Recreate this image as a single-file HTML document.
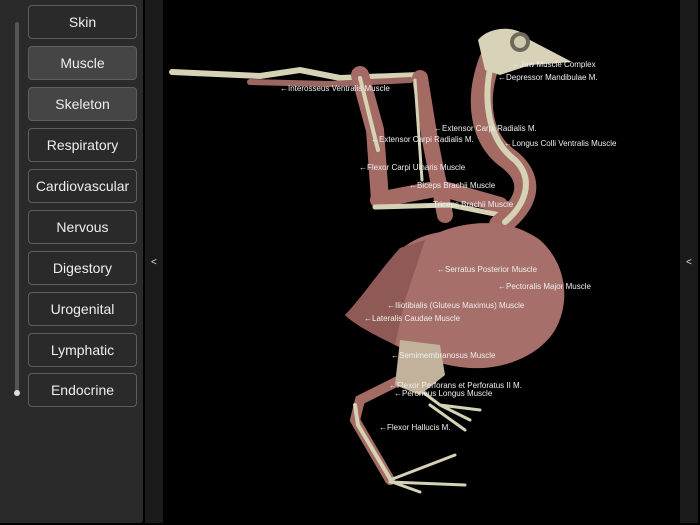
<!DOCTYPE html>
<html><head><meta charset="utf-8"><style>
body{margin:0;width:700px;height:525px;background:#000;overflow:hidden;position:relative;font-family:"Liberation Sans",sans-serif}
#side{position:absolute;left:0;top:0;width:143px;height:523px;background:#2a2a2a;border-radius:0 0 3px 0}
.track{position:absolute;left:15px;top:22px;width:4px;height:370px;background:#555;border-radius:2px}
.dot{position:absolute;left:14px;top:390px;width:6px;height:6px;border-radius:3px;background:#ddd}
.b{position:absolute;left:28px;width:107px;height:32px;border:1px solid #5e5e5e;border-radius:4px;background:#2a2a2a;color:#eee;font-size:14px;line-height:32px;text-align:center}
.b.on{background:#454545}
.strip{position:absolute;top:0;width:18px;height:523px;background:#1b1b1b;color:#ddd;font-size:10px}
.strip span{position:absolute;top:257px;left:6px}
svg{position:absolute;left:0;top:0}
svg text{font-family:"Liberation Sans",sans-serif;font-size:8px;fill:#eee}
</style></head><body>
<div id="side">
<div class="track"></div><div class="dot"></div>
<div class="b" style="top:5px">Skin</div>
<div class="b on" style="top:46px">Muscle</div>
<div class="b on" style="top:87px">Skeleton</div>
<div class="b" style="top:128px">Respiratory</div>
<div class="b" style="top:169px">Cardiovascular</div>
<div class="b" style="top:210px">Nervous</div>
<div class="b" style="top:251px">Digestory</div>
<div class="b" style="top:292px">Urogenital</div>
<div class="b" style="top:333px">Lymphatic</div>
<div class="b" style="top:373px">Endocrine</div>
</div>
<div class="strip" style="left:145px"><span>&lt;</span></div>
<div class="strip" style="left:680px"><span>&lt;</span></div>
<svg width="700" height="525">
<g stroke-linecap="round" fill="none">
<path d="M172 72 L260 76 L300 70 L340 78 L420 75" stroke="#d6d2b6" stroke-width="6"/>
<path d="M250 82 L330 84 L410 80" stroke="#9c6660" stroke-width="6"/>
<path d="M420 78 L430 140 L440 190 L445 215" stroke="#a46b64" stroke-width="16"/>
<path d="M360 75 L375 130 L380 200" stroke="#a46b64" stroke-width="18"/>
<path d="M360 78 L378 150" stroke="#d6d2b6" stroke-width="4"/>
<path d="M378 200 L440 188 L500 205" stroke="#a46b64" stroke-width="16"/>
<path d="M375 207 L450 205 L500 215" stroke="#d6d2b6" stroke-width="5"/>
<path d="M415 80 L422 180" stroke="#d6d2b6" stroke-width="3"/>
<path d="M490 60 C475 100 480 140 510 160 C540 185 520 210 500 225" stroke="#a46b64" stroke-width="22"/>
<path d="M492 60 C482 100 488 140 515 160 C535 180 525 205 505 222" stroke="#d6d2b6" stroke-width="6"/>
<path d="M400 380 L360 400 L355 420 L390 480" stroke="#a46b64" stroke-width="10"/>
<path d="M355 405 L358 425 L392 482" stroke="#d6d2b6" stroke-width="4"/>
<path d="M390 480 L455 455 M390 482 L465 485 M392 482 L420 492" stroke="#d6d2b6" stroke-width="3"/>
<path d="M420 390 L440 405 L480 410 M440 405 L470 420 M430 405 L465 430" stroke="#d6d2b6" stroke-width="3"/>
</g>
<path d="M440 232 C470 220 510 218 540 240 C565 262 572 300 555 330 C540 355 505 370 470 368 C440 366 415 355 395 345 C375 335 355 325 345 315 C360 300 380 270 400 250 C415 238 425 235 440 232 Z" fill="#a66f69"/>
<path d="M345 315 C360 300 380 270 400 248 L425 240 L405 300 L395 345 C375 335 355 325 345 315 Z" fill="#8f5a55"/>
<path d="M400 340 L440 345 L445 375 L420 395 L395 385 Z" fill="#c2b29c"/>
<path d="M478 40 C490 25 520 25 530 40 L572 62 L530 65 L500 75 L485 70 Z" fill="#d8d3b8"/>
<circle cx="520" cy="42" r="10" fill="#6e6a5a"/>
<circle cx="520" cy="42" r="6" fill="#cfcab0"/>
<g>
<text x="512" y="67">←Jaw Muscle Complex</text>
<text x="498" y="80">←Depressor Mandibulae M.</text>
<text x="280" y="91">←Interosseus Ventralis Muscle</text>
<text x="434" y="131">←Extensor Carpi Radialis M.</text>
<text x="371" y="142">←Extensor Carpi Radialis M.</text>
<text x="504" y="146">←Longus Colli Ventralis Muscle</text>
<text x="359" y="170">←Flexor Carpi Ulnaris Muscle</text>
<text x="409" y="188">←Biceps Brachii Muscle</text>
<text x="425" y="207">←Triceps Brachii Muscle</text>
<text x="437" y="272">←Serratus Posterior Muscle</text>
<text x="498" y="289">←Pectoralis Major Muscle</text>
<text x="387" y="308">←Iliotibialis (Gluteus Maximus) Muscle</text>
<text x="364" y="321">←Lateralis Caudae Muscle</text>
<text x="391" y="358">←Semimembranosus Muscle</text>
<text x="389" y="388">←Flexor Perforans et Perforatus II M.</text>
<text x="394" y="396">←Peroneus Longus Muscle</text>
<text x="379" y="430">←Flexor Hallucis M.</text>
</g>
</svg>
</body></html>
